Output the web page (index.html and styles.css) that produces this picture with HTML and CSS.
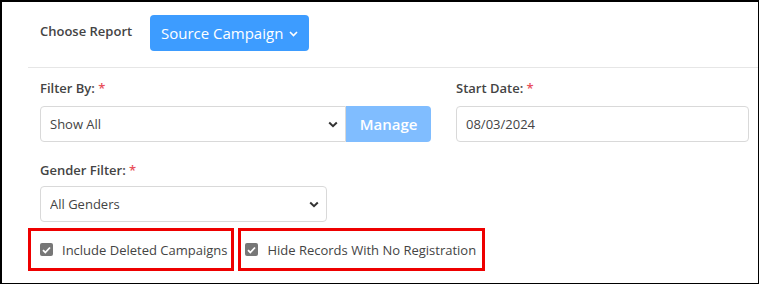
FILE: index.html
```html
<!DOCTYPE html>
<html lang="en">
<head>
    <meta charset="UTF-8">
    <title>Reports</title>
    <link rel="stylesheet" href="styles.css">
</head>
<body>
    <div class="frame">
        <div class="report-bar">
            <span class="report-title">Choose Report</span>
            <button class="report-btn">Source Campaign
                <svg width="9" height="6" viewBox="0 0 9 6"><path d="M1 1l3.5 3.5L8 1" fill="none" stroke="#fff" stroke-width="1.6"/></svg>
            </button>
        </div>
        <div class="form-area">
            <div class="form-row">
                <div class="col col-left">
                    <label class="field-label">Filter By: <span class="req">*</span></label>
                    <div class="input-group">
                        <div class="select-wrap wide">
                            <select class="form-select"><option>Show All</option></select>
                            <svg class="chevron" width="10" height="7" viewBox="0 0 10 7"><path d="M1.2 1.5L5 5.2l3.8-3.7" fill="none" stroke="#333" stroke-width="2"/></svg>
                        </div>
                        <button class="manage-btn">Manage</button>
                    </div>
                </div>
                <div class="col col-right">
                    <label class="field-label">Start Date: <span class="req">*</span></label>
                    <input class="form-input" type="text" value="08/03/2024">
                </div>
            </div>
            <div class="form-row">
                <div class="col col-left">
                    <label class="field-label second">Gender Filter: <span class="req">*</span></label>
                    <div class="select-wrap gender">
                        <select class="form-select rounded"><option>All Genders</option></select>
                        <svg class="chevron" width="10" height="7" viewBox="0 0 10 7"><path d="M1.2 1.5L5 5.2l3.8-3.7" fill="none" stroke="#333" stroke-width="2"/></svg>
                    </div>
                </div>
            </div>
            <div class="check-row">
                <label class="check-box first">
                    <span class="tick"><svg width="9" height="8" viewBox="0 0 9 8"><path d="M1 4.2l2.3 2.3L8 1.5" fill="none" stroke="#fff" stroke-width="1.8"/></svg></span>
                    Include Deleted Campaigns
                </label>
                <label class="check-box second">
                    <span class="tick"><svg width="9" height="8" viewBox="0 0 9 8"><path d="M1 4.2l2.3 2.3L8 1.5" fill="none" stroke="#fff" stroke-width="1.8"/></svg></span>
                    Hide Records With No Registration
                </label>
            </div>
        </div>
    </div>
</body>
</html>
```

FILE: styles.css
```css
body {
    margin: 0;
    font-family: "Open Sans", "Liberation Sans", sans-serif;
    color: #444;
    background: #fff;
}

.frame {
    width: 759px;
    height: 284px;
    box-sizing: border-box;
    border: 1px solid #000;
    border-top-width: 2px;
    border-left-width: 2px;
    overflow: hidden;
}

.report-bar {
    display: flex;
    align-items: center;
    padding: 13px 0 16px 12px;
    border-bottom: 1px solid #e6e6e6;
    margin-left: 26px;
}

.report-title {
    font-size: 13px;
    font-weight: 600;
    color: #444;
    padding-bottom: 5px;
}

.report-btn {
    margin-left: 18px;
    height: 36px;
    width: 159px;
    border: 0;
    border-radius: 4px;
    background: #3d9cff;
    color: #fff;
    font-family: inherit;
    font-size: 15px;
    display: flex;
    align-items: center;
    justify-content: center;
    gap: 6px;
    padding: 0;
}

.report-btn svg {
    margin-top: 1px;
}

.form-area {
    padding-left: 26px;
}

.form-row {
    display: flex;
}

.col {
    padding: 0 12px;
    box-sizing: border-box;
}

.col-left {
    width: 416px;
}

.col-right {
    flex: 1;
    padding-right: 9px;
}

.field-label {
    display: block;
    font-size: 13px;
    font-weight: 600;
    line-height: 20px;
    margin-top: 10px;
    margin-bottom: 8px;
}

.field-label.second {
    margin-top: 18px;
    margin-bottom: 6px;
}

.req {
    color: #e8505b;
}

.input-group {
    display: flex;
}

.select-wrap {
    position: relative;
}

.select-wrap.wide {
    width: 306px;
}

.select-wrap.gender {
    width: 287px;
}

.form-select,
.form-input {
    appearance: none;
    width: 100%;
    height: 36px;
    box-sizing: border-box;
    border: 1px solid #d9d9d9;
    background: #fff;
    font-family: inherit;
    font-size: 13px;
    color: #444;
    padding: 0 9px;
    outline: 0;
    display: block;
}

.form-select {
    border-radius: 4px 0 0 4px;
}

.form-select.rounded,
.form-input {
    border-radius: 4px;
}

.chevron {
    position: absolute;
    right: 8px;
    top: 15px;
    pointer-events: none;
}

.manage-btn {
    width: 85px;
    height: 36px;
    border: 0;
    border-radius: 0 4px 4px 0;
    background: #80bdff;
    color: #fff;
    font-family: inherit;
    font-size: 15px;
    font-weight: 600;
    padding: 0;
}

.check-row {
    display: flex;
    gap: 4px;
    margin-top: 6px;
}

.check-box {
    display: flex;
    align-items: center;
    height: 43px;
    box-sizing: border-box;
    border: 3px solid #ee0000;
    padding: 0 4px 0 9px;
    font-size: 13px;
    color: #444;
    gap: 9px;
}

.check-box.second {
    padding: 0 6px 0 4px;
}

.tick {
    width: 13px;
    height: 13px;
    border-radius: 2px;
    background: #777;
    display: flex;
    align-items: center;
    justify-content: center;
}
```
